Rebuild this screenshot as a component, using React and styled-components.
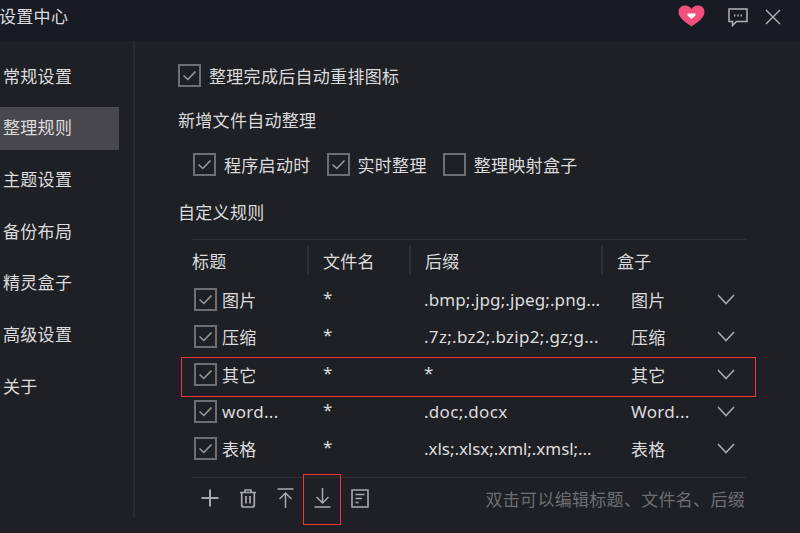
import React from "react";
import styled, { createGlobalStyle } from "styled-components";

const GlobalStyle = createGlobalStyle`
	html, body {
		margin: 0;
		padding: 0;
		background: #1f2025;
	}
	* {
		box-sizing: border-box;
	}
`;

const Window = styled.div`
	position: relative;
	width: 800px;
	height: 533px;
	overflow: hidden;
	background: #1f2025;
	color: #dcdcde;
	font-family: "Noto Sans", "Noto Sans CJK SC", sans-serif;
	font-size: 17px;
	letter-spacing: 0.3px;
`;

const TitleBar = styled.header`
	display: flex;
	align-items: center;
	height: 41px;
	padding: 0 19px 7px 0;
	background: #181b24;
`;

const Title = styled.div`
	flex: 1;
	margin: 0 0 4px -1px;
`;

const TitleIcons = styled.div`
	display: flex;
	align-items: center;
	gap: 17px;
`;

const HeartSlot = styled.span`
	display: flex;
	margin: 0 6px 2px 0;
`;

const Body = styled.div`
	display: flex;
	height: 492px;
`;

const Sidebar = styled.nav`
	flex: none;
	width: 135px;
	height: 477px;
	padding-top: 14px;
	border-right: 2px solid #2a2b30;
`;

const NavItem = styled.div`
	display: flex;
	align-items: center;
	width: 119px;
	height: 43px;
	margin-bottom: 8.7px;
	padding: 0 0 3px 3px;
	background: ${(p) => (p.$active ? "#48474c" : "transparent")};
`;

const Content = styled.main`
	flex: 1;
	padding: 22px 54px 0 43px;
`;

const Line = styled.div`
	display: flex;
	align-items: center;
	height: 24px;
	margin-bottom: ${(p) => p.$gap || 0}px;
	padding-left: ${(p) => p.$indent || 0}px;
`;

const Box = styled.span`
	flex: none;
	display: inline-flex;
	align-items: center;
	justify-content: center;
	width: 23px;
	height: 23px;
	border: 2px solid #6f6f72;
`;

const Option = styled.label`
	display: flex;
	align-items: center;
	gap: 8px;
	margin-right: ${(p) => p.$after || 0}px;
`;

const Table = styled.section`
	margin: 16px 0 0 14px;
	border-top: 1px solid #2f3035;
`;

const HeadRow = styled.div`
	display: grid;
	grid-template-columns: 115px 102px 192px 1fr;
	align-items: center;
	height: 40px;
	margin-bottom: 1px;
`;

const HeadCell = styled.div`
	display: flex;
	align-items: center;
	height: 29px;
	padding-left: ${(p) => (p.$first ? 0 : 14)}px;
	border-left: ${(p) => (p.$first ? "none" : "2px solid #2f3035")};
`;

const Row = styled.div`
	display: grid;
	grid-template-columns: 116px 102px 192px 1fr 30px;
	align-items: center;
	height: 37.3px;
	padding-right: 11px;
`;

const NameCell = styled.div`
	display: flex;
	align-items: center;
	gap: 5px;
	padding-left: 2px;
`;

const Cell = styled.div`
	padding-left: ${(p) => p.$pad || 15}px;
	white-space: nowrap;
	letter-spacing: ${(p) => p.$spacing ?? 0.3}px;
`;

const StarCell = styled(Cell)`
	padding-bottom: 4px;
`;

const ChevronSlot = styled.span`
	display: flex;
	justify-self: end;
`;

const Footer = styled.footer`
	display: flex;
	align-items: center;
	height: 41px;
	margin-top: 10px;
	padding-left: 8.5px;
	border-top: 1px solid #2f3035;
`;

const Tools = styled.div`
	flex: 1;
	display: flex;
	align-items: center;
	gap: 20px;
	color: #a9a9ab;
`;

const Hint = styled.div`
	color: #6d6e72;
	white-space: nowrap;
	margin-right: 1px;
`;

const Mark = styled.div`
	position: absolute;
	left: ${(p) => p.$x}px;
	top: ${(p) => p.$y}px;
	width: ${(p) => p.$w}px;
	height: ${(p) => p.$h}px;
	border: 1px solid #f0343a;
	pointer-events: none;
`;

const Check = () => (
	<svg width="17" height="17" viewBox="0 0 17 17" fill="none" stroke="#9a9a9c" strokeWidth="1.6">
		<path d="M2.5 8.5 L6.8 12.5 L14.5 4.5" />
	</svg>
);

const CheckBox = ({ off }) => <Box>{!off && <Check />}</Box>;

const Chevron = () => (
	<svg width="18" height="11" viewBox="0 0 18 11" fill="none" stroke="#a9a9ab" strokeWidth="1.6">
		<path d="M1 1 L9 9.5 L17 1" />
	</svg>
);

const Heart = () => (
	<svg width="27" height="22" viewBox="0 0 27 22">
		<path
			d="M13.5 21.5 C10 18.8 0.5 13.5 0.5 7 C0.5 3 3.5 0.5 7 0.5 C9.8 0.5 12.3 1.8 13.5 4 C14.7 1.8 17.2 0.5 20 0.5 C23.5 0.5 26.5 3 26.5 7 C26.5 13.5 17 18.8 13.5 21.5 Z"
			fill="#f2507c"
		/>
		<path d="M9.5 8.5 H17.5 V10.5 L13.5 14 L9.5 10.5 Z" fill="#ffffff" />
	</svg>
);

const Comment = () => (
	<svg width="20" height="19" viewBox="0 0 20 19" fill="none" stroke="#b4b4b6" strokeWidth="1.5">
		<path d="M1 1 H19 V13.5 H8.5 L4.5 17.5 V13.5 H1 Z" />
		<path d="M6 7.5 H7.4 M9.3 7.5 H10.7 M12.6 7.5 H14" strokeWidth="1.8" />
	</svg>
);

const Close = () => (
	<svg width="16" height="16" viewBox="0 0 16 16" fill="none" stroke="#b4b4b6" strokeWidth="1.4">
		<path d="M1 1 L15 15 M15 1 L1 15" />
	</svg>
);

const Plus = () => (
	<svg width="18" height="18" viewBox="0 0 18 18" fill="none" stroke="currentColor" strokeWidth="2">
		<path d="M0.5 9 H17.5 M9 0.5 V17.5" />
	</svg>
);

const Trash = () => (
	<svg width="18" height="19" viewBox="0 0 18 19" fill="none" stroke="currentColor" strokeWidth="1.7">
		<path d="M1 3.5 H17 M6 3.5 V1 H12 V3.5 M2.7 3.5 V16 Q2.7 18 4.7 18 H13.3 Q15.3 18 15.3 16 V3.5 M7 7 V14.5 M11 7 V14.5" />
	</svg>
);

const ToTop = () => (
	<svg width="17" height="20" viewBox="0 0 17 20" fill="none" stroke="currentColor" strokeWidth="1.5">
		<path d="M0.5 1 H16.5 M8.5 20 V5 M2.5 11 L8.5 5 L14.5 11" />
	</svg>
);

const ToBottom = () => (
	<svg width="17" height="20" viewBox="0 0 17 20" fill="none" stroke="currentColor" strokeWidth="1.5">
		<path d="M0.5 19 H16.5 M8.5 0 V15 M2.5 9 L8.5 15 L14.5 9" />
	</svg>
);

const Doc = () => (
	<svg width="18" height="19" viewBox="0 0 18 19" fill="none" stroke="currentColor" strokeWidth="1.6">
		<path d="M1 1 H17 V18 H1 Z M4.5 5.5 H13.5 M4.5 9.5 H11 M4.5 13.5 H7.5" />
	</svg>
);

const navItems = ["常规设置", "整理规则", "主题设置", "备份布局", "精灵盒子", "高级设置", "关于"];

const rules = [
	{ title: "图片", suffix: ".bmp;.jpg;.jpeg;.png...", spacing: 0.1, box: "图片" },
	{ title: "压缩", suffix: ".7z;.bz2;.bzip2;.gz;g...", spacing: 0.3, box: "压缩" },
	{ title: "其它", suffix: "*", star: true, box: "其它" },
	{ title: "word...", suffix: ".doc;.docx", spacing: 0.3, box: "Word..." },
	{ title: "表格", suffix: ".xls;.xlsx;.xml;.xmsl;...", spacing: -0.05, box: "表格" },
];

function App() {
	return (
		<Window>
			<GlobalStyle />
			<TitleBar>
				<Title>设置中心</Title>
				<TitleIcons>
					<HeartSlot>
						<Heart />
					</HeartSlot>
					<Comment />
					<Close />
				</TitleIcons>
			</TitleBar>
			<Body>
				<Sidebar>
					{navItems.map((item) => (
						<NavItem key={item} $active={item === "整理规则"}>
							{item}
						</NavItem>
					))}
				</Sidebar>
				<Content>
					<Line $gap={20}>
						<Option>
							<CheckBox />
							整理完成后自动重排图标
						</Option>
					</Line>
					<Line $gap={21}>新增文件自动整理</Line>
					<Line $gap={23} $indent={15}>
						<Option $after={16}>
							<CheckBox />
							程序启动时
						</Option>
						<Option $after={16}>
							<CheckBox />
							实时整理
						</Option>
						<Option>
							<CheckBox off />
							整理映射盒子
						</Option>
					</Line>
					<Line>自定义规则</Line>
					<Table>
						<HeadRow>
							<HeadCell $first>标题</HeadCell>
							<HeadCell>文件名</HeadCell>
							<HeadCell>后缀</HeadCell>
							<HeadCell>盒子</HeadCell>
						</HeadRow>
						{rules.map((rule) => (
							<Row key={rule.title}>
								<NameCell>
									<CheckBox />
									{rule.title}
								</NameCell>
								<StarCell>*</StarCell>
								{rule.star ? (
									<StarCell $pad={14}>{rule.suffix}</StarCell>
								) : (
									<Cell $pad={14} $spacing={rule.spacing}>
										{rule.suffix}
									</Cell>
								)}
								<Cell $pad={29}>{rule.box}</Cell>
								<ChevronSlot>
									<Chevron />
								</ChevronSlot>
							</Row>
						))}
						<Footer>
							<Tools>
								<Plus />
								<Trash />
								<ToTop />
								<ToBottom />
								<Doc />
							</Tools>
							<Hint>双击可以编辑标题、文件名、后缀</Hint>
						</Footer>
					</Table>
				</Content>
			</Body>
			<Mark $x={181} $y={357} $w={575} $h={40} />
			<Mark $x={303} $y={474} $w={38} $h={51} />
		</Window>
	);
}

export default App;
